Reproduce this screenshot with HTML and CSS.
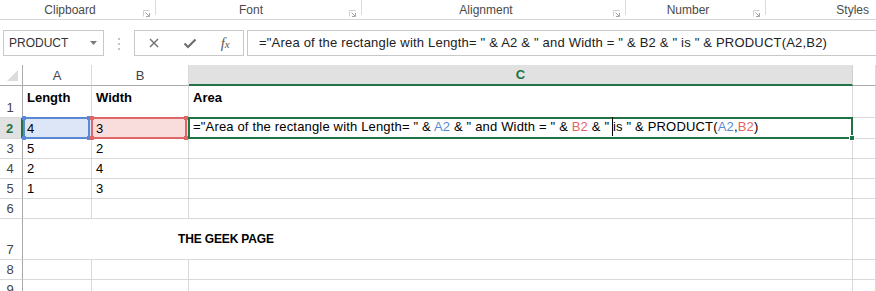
FILE: index.html
```html
<!DOCTYPE html>
<html>
<head>
<meta charset="utf-8">
<link rel="stylesheet" href="styles.css">
</head>
<body>
<div class="ribbon">
  <div class="group g1"><span class="glabel">Clipboard</span><svg class="launcher" viewBox="0 0 7 7"><path d="M0.5 6.5V0.5H6.5" fill="none" stroke="#cfcfcf"/><path d="M2.5 2.5L6 6M3 6.5H6.5V3" fill="none" stroke="#a6a6a6"/></svg></div>
  <span class="sep"></span>
  <div class="group g2"><span class="glabel">Font</span><svg class="launcher" viewBox="0 0 7 7"><path d="M0.5 6.5V0.5H6.5" fill="none" stroke="#cfcfcf"/><path d="M2.5 2.5L6 6M3 6.5H6.5V3" fill="none" stroke="#a6a6a6"/></svg></div>
  <span class="sep"></span>
  <div class="group g3"><span class="glabel">Alignment</span><svg class="launcher" viewBox="0 0 7 7"><path d="M0.5 6.5V0.5H6.5" fill="none" stroke="#cfcfcf"/><path d="M2.5 2.5L6 6M3 6.5H6.5V3" fill="none" stroke="#a6a6a6"/></svg></div>
  <span class="sep"></span>
  <div class="group g4"><span class="glabel">Number</span><svg class="launcher" viewBox="0 0 7 7"><path d="M0.5 6.5V0.5H6.5" fill="none" stroke="#cfcfcf"/><path d="M2.5 2.5L6 6M3 6.5H6.5V3" fill="none" stroke="#a6a6a6"/></svg></div>
  <span class="sep"></span>
  <div class="group g5"><span class="glabel">Styles</span></div>
</div>

<div class="fbar">
  <div class="namebox"><span>PRODUCT</span><svg class="dd" viewBox="0 0 7 4"><path d="M0 0H7L3.5 4Z" fill="#7a7a7a"/></svg></div>
  <svg class="grip" viewBox="0 0 30 26"><rect x="14" y="8" width="2" height="2" fill="#c4c4c4"/><rect x="14" y="13" width="2" height="2" fill="#c4c4c4"/><rect x="14" y="18" width="2" height="2" fill="#c4c4c4"/></svg>
  <div class="fbtns">
    <span class="fbtn"><svg width="10" height="10" viewBox="0 0 10 10"><path d="M1 1L9 9M9 1L1 9" stroke="#6f6f6f" stroke-width="1.4" fill="none"/></svg></span>
    <span class="fbtn"><svg width="14" height="11" viewBox="0 0 14 11"><path d="M1.5 5.5L5 9L12.5 1.5" stroke="#6f6f6f" stroke-width="2.2" fill="none"/></svg></span>
    <span class="fbtn"><span class="fx"><span class="fx-f">f</span><span class="fx-x">x</span></span></span>
  </div>
  <div class="finput">="Area of the rectangle with Length= " &amp; A2 &amp; " and Width = " &amp; B2 &amp; " is " &amp; PRODUCT(A2,B2)</div>
</div>

<div class="sheet">
  <!-- header row -->
  <div class="ch corner"><svg class="tri" viewBox="0 0 11 11"><path d="M11 0V11H0Z" fill="#dcdcdc"/></svg></div>
  <div class="ch">A</div>
  <div class="ch">B</div>
  <div class="ch ch-sel">C</div>
  <div class="ch"></div>

  <!-- row 1 -->
  <div class="c rh">1</div>
  <div class="c top b">Length</div>
  <div class="c top b">Width</div>
  <div class="c top b">Area</div>
  <div class="c"></div>

  <!-- row 2 -->
  <div class="c rh rh-sel">2</div>
  <div class="c a2"><span class="box blue"><i class="dot tl"></i><i class="dot tr"></i><i class="dot bl"></i><i class="dot br"></i></span><span class="val">4</span></div>
  <div class="c b2"><span class="box red"><i class="dot tl"></i><i class="dot tr"></i><i class="dot bl"></i><i class="dot br"></i></span><span class="val">3</span></div>
  <div class="c c2"><span class="box green"><i class="handle"></i></span><span class="val formula">="Area of the rectangle with Length= " &amp; <span class="rb">A2</span> &amp; " and Width = " &amp; <span class="rr">B2</span> &amp; " <span class="caret"></span>is " &amp; PRODUCT(<span class="rb">A2</span>,<span class="rr">B2</span>)</span></div>
  <div class="c"></div>

  <!-- row 3 -->
  <div class="c rh">3</div>
  <div class="c">5</div>
  <div class="c">2</div>
  <div class="c"></div>
  <div class="c"></div>

  <!-- row 4 -->
  <div class="c rh">4</div>
  <div class="c">2</div>
  <div class="c">4</div>
  <div class="c"></div>
  <div class="c"></div>

  <!-- row 5 -->
  <div class="c rh">5</div>
  <div class="c">1</div>
  <div class="c">3</div>
  <div class="c"></div>
  <div class="c"></div>

  <!-- row 6 -->
  <div class="c rh">6</div>
  <div class="c"></div>
  <div class="c"></div>
  <div class="c"></div>
  <div class="c"></div>

  <!-- row 7 -->
  <div class="c rh">7</div>
  <div class="c merged b">THE GEEK PAGE</div>
  <div class="c"></div>

  <!-- row 8 -->
  <div class="c rh">8</div>
  <div class="c"></div>
  <div class="c"></div>
  <div class="c"></div>
  <div class="c"></div>

  <!-- row 9 -->
  <div class="c rh">9</div>
  <div class="c"></div>
  <div class="c"></div>
  <div class="c"></div>
  <div class="c"></div>
</div>
</body>
</html>
```

FILE: styles.css
```css
* { box-sizing: border-box; }
html, body { margin: 0; padding: 0; }
body {
  width: 876px;
  height: 291px;
  overflow: hidden;
  background: #fff;
  font-family: "Liberation Sans", Arial, sans-serif;
  color: #000;
}

/* ribbon group labels */
.ribbon {
  display: flex;
  height: 20px;
  border-bottom: 1px solid #d6d6d6;
}
.group { display: flex; align-items: flex-start; }
.g1 { width: 155px; }
.g2 { width: 205px; }
.g3 { width: 263px; }
.g4 { width: 139px; }
.g5 { flex: 1; justify-content: flex-end; padding-right: 7px; }
.glabel {
  flex: 1;
  text-align: center;
  font-size: 12px;
  line-height: 20px;
  color: #4a4a4a;
}
.g5 .glabel { flex: none; }
.launcher { width: 7px; height: 7px; margin: 10px 5px 0 3px; flex: none; }
.sep { width: 1px; height: 15px; background: #dcdcdc; flex: none; }

/* formula bar */
.fbar {
  display: flex;
  height: 26px;
  margin-top: 10px;
}
.namebox {
  width: 101px;
  margin-left: 3px;
  border: 1px solid #c8c8c8;
  display: flex;
  align-items: center;
  justify-content: space-between;
  padding: 0 6px 0 5px;
  font-size: 12px;
  color: #333;
}
.dd { width: 7px; height: 4px; }
.grip { width: 30px; height: 26px; flex: none; }
.fbtns {
  width: 110px;
  border: 1px solid #c8c8c8;
  display: flex;
  align-items: center;
  padding-left: 1px;
}
.fbtn { width: 36px; display: flex; justify-content: center; align-items: center; height: 24px; }
.fx { font-family: "Liberation Serif", "Times New Roman", serif; font-style: italic; color: #5a5a5a; }
.fx-f { font-size: 15px; }
.fx-x { font-size: 11px; }
.finput {
  flex: 1;
  margin-left: 3px;
  margin-right: -3px;
  border: 1px solid #c8c8c8;
  padding-left: 11px;
  font-size: 13px;
  letter-spacing: 0.2px;
  line-height: 24px;
  color: #222;
  white-space: nowrap;
  overflow: hidden;
}

/* sheet */
.sheet {
  margin-top: 9px;
  display: grid;
  grid-template-columns: 23px 69px 97px 664px 1fr;
  grid-template-rows: 21px 32px 21px 20px 20px 20px 20px 41px 20px 20px;
  font-size: 13px;
}
.ch {
  border-right: 1px solid #dadada;
  border-bottom: 1px solid #ababab;
  display: flex;
  align-items: center;
  justify-content: center;
  color: #444;
  font-size: 13px;
}
.corner { justify-content: flex-end; align-items: flex-end; padding: 0 4px 4px 0; border-right-color: #ababab; }
.tri { width: 11px; height: 11px; }
.ch-sel {
  background: #e1e1e1;
  color: #217346;
  font-weight: bold;
  border-bottom: 2px solid #217346;
  border-right-color: #d0d0d0;
}

.c {
  border-right: 1px solid #d9d9d9;
  border-bottom: 1px solid #d9d9d9;
  display: flex;
  align-items: flex-end;
  padding: 0 3px 2px 4px;
  white-space: nowrap;
  position: relative;
  line-height: 15px;
}
.c.top { align-items: flex-start; padding-top: 4px; }
.b { font-weight: bold; }
.rh {
  border-right: 1px solid #a8a8a8;
  justify-content: center;
  padding: 0 2px 2px 0;
  color: #444;
}
.rh-sel {
  background: #e1e1e1;
  color: #217346;
  font-weight: bold;
  border-right: 2px solid #217346;
}
.a2 { background: #dde6f7; }
.b2 { background: #f9dcdc; }
.c2 { padding-left: 4px; }
.formula { letter-spacing: 0.17px; }
.merged {
  grid-column: span 3;
  align-items: center;
  padding: 0 0 0 155px;
  font-size: 12px;
  letter-spacing: -0.15px;
}

.box {
  position: absolute;
  top: -1px;
  bottom: -1px;
  border: 2px solid;
  z-index: 1;
}
.blue { left: 0; right: 1px; border-color: #5b88d3; color: #5b88d3; }
.red { left: -1px; right: 1px; border-color: #e06666; color: #e06666; }
.green { left: -1px; right: -1px; border-color: #217346; z-index: 2; }
.dot {
  position: absolute;
  width: 4px;
  height: 4px;
  background: currentColor;
  z-index: 3;
}
.tl { top: -3px; left: -3px; }
.tr { top: -3px; right: -3px; }
.bl { bottom: -3px; left: -3px; }
.br { bottom: -3px; right: -3px; }
.handle {
  position: absolute;
  right: -4px;
  bottom: -4px;
  width: 6px;
  height: 6px;
  background: #217346;
  border: 1px solid #fff;
  z-index: 3;
}
.val { position: relative; z-index: 4; }
.rb { color: #5b88d3; }
.rr { color: #e06666; }
.caret {
  display: inline-block;
  width: 1px;
  height: 19px;
  background: #000;
  vertical-align: -5px;
  margin-left: -1px;
}
```
